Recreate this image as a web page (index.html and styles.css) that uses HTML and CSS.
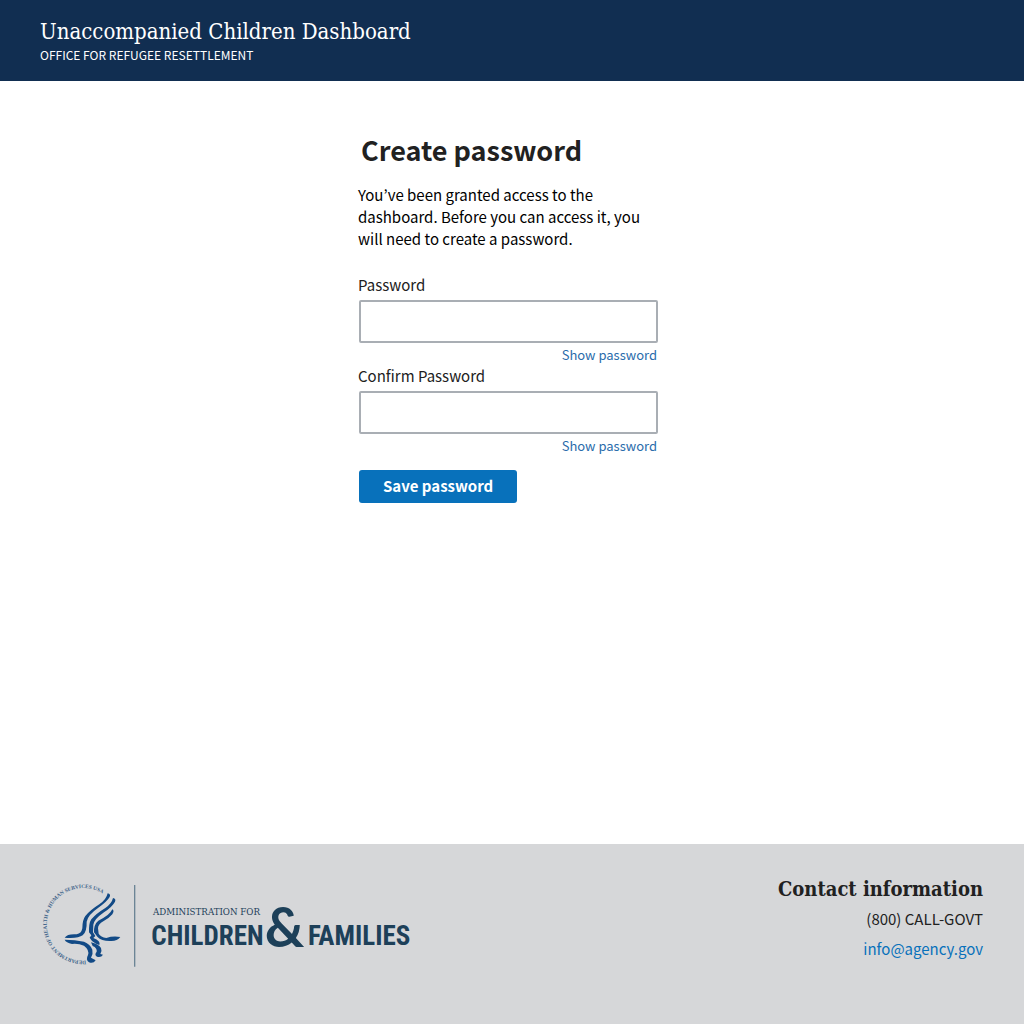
FILE: index.html
```html
<!DOCTYPE html>
<html lang="en">
<head>
<meta charset="utf-8">
<meta name="viewport" content="width=device-width, initial-scale=1">
<title>Create password</title>
<link rel="stylesheet" href="styles.css">
</head>
<body>
<header class="site-header">
  <p class="site-title">Unaccompanied Children Dashboard</p>
  <p class="site-office">OFFICE FOR REFUGEE RESETTLEMENT</p>
</header>
<main class="main">
  <form class="form">
    <h1 class="form-title">Create password</h1>
    <p class="form-intro">You’ve been granted access to the dashboard. Before you can access it, you will need to create a password.</p>
    <div class="field">
      <label class="field-label" for="password">Password</label>
      <input class="field-input" id="password" type="password">
      <a class="field-toggle" href="#password">Show password</a>
    </div>
    <div class="field">
      <label class="field-label" for="confirm">Confirm Password</label>
      <input class="field-input" id="confirm" type="password">
      <a class="field-toggle" href="#confirm">Show password</a>
    </div>
    <button class="save" type="button">Save password</button>
  </form>
</main>
<footer class="site-footer">
  <svg class="logo" viewBox="30 24 1122 258" role="img" aria-label="Administration for Children and Families">
    <defs><path id="ring" d="M168 257A109 109 0 1 1 240 75"/></defs>
    <text class="logo-ring"><textPath href="#ring">DEPARTMENT OF HEALTH &amp; HUMAN SERVICES USA</textPath></text>
    <g class="logo-eagle">
      <path d="M233 55Q243 57 239 66Q231 80 205 98Q173 120 170 140Q171 170 158 181Q145 191 104 188Q112 176 140 178Q154 176 157 160Q157 135 166 123Q181 105 208 88Q229 74 233 55Z"/>
      <path d="M249 69Q259 71 255 80Q248 94 222 112Q193 132 190 149L189 172L196 183L190 189Q213 198 208 210L198 206Q184 199 179 188L184 181L177 172Q176 145 184 133Q198 116 226 99Q245 86 249 69Z"/>
      <path d="M247 103Q254 107 247 118Q237 130 220 139Q204 148 204 160L206 176Q212 186 229 189Q249 182 271 186Q261 200 239 198Q214 198 202 185L192 172Q191 148 205 137Q239 121 247 103Z"/>
      <path d="M104 194Q135 194 162 200Q181 207 187 224Q190 236 183 248L197 256Q190 267 177 262Q166 255 174 240Q179 225 162 212Q145 205 126 207Q108 203 104 194Z"/>
      <path d="M183 202Q205 207 213 219Q217 228 211 237L219 239Q213 249 201 245Q192 240 200 230Q202 219 188 213Z"/>
    </g>
    <path class="logo-rule" d="M314 30V275"/>
    <text class="logo-small" x="369" y="121">ADMINISTRATION FOR</text>
    <text class="logo-big" x="364" y="209">CHILDREN</text>
    <text class="logo-amp" x="704" y="216">&amp;</text>
    <text class="logo-big" x="834" y="209">FAMILIES</text>
  </svg>
  <address class="contact">
    <h2 class="contact-title">Contact information</h2>
    <p class="contact-line">(800) CALL-GOVT</p>
    <a class="contact-line contact-link" href="mailto:info@agency.gov">info@agency.gov</a>
  </address>
</footer>
</body>
</html>
```
FILE: styles.css
```css
* { box-sizing: border-box; }

body {
  margin: 0;
  min-height: 100vh;
  display: flex;
  flex-direction: column;
  background: #fff;
  color: #212121;
  font-family: "Noto Sans CJK KR", "Open Sans", sans-serif;
  font-size: 15px;
  line-height: 22px;
}

h1, h2, p { margin: 0; }

a { text-decoration: none; }

.site-header {
  padding: 18px 40px 17px;
  background: #112e51;
  color: #fff;
}

.site-title {
  font-family: "DejaVu Serif Condensed", "DejaVu Serif", serif;
  font-size: 22px;
  line-height: 28px;
}

.site-office {
  font-size: 12px;
  line-height: 18px;
}

.main {
  flex: 1;
  display: flex;
  justify-content: center;
  align-items: flex-start;
  padding: 49px 8px 40px 0;
}

.form {
  width: 300px;
  display: flex;
  flex-direction: column;
}

.form-title {
  padding-left: 3px;
  font-size: 27px;
  font-weight: 700;
  line-height: 40px;
}

.form-intro {
  margin: 14px 0 24px;
  color: #000;
}

.field {
  display: flex;
  flex-direction: column;
}

.field-label { line-height: 22px; }

.field-input {
  height: 43px;
  margin: 4px 0 2px 1px;
  padding: 0 10px;
  border: 2px solid #a9aeb4;
  border-radius: 2px;
  background: #fff;
  font: inherit;
}

.field-toggle {
  align-self: flex-end;
  margin-right: 1px;
  color: #2a6cab;
  font-size: 13px;
  line-height: 20px;
}

.save {
  align-self: flex-start;
  margin: 14px 0 0 1px;
  padding: 0 24px 2px;
  height: 33px;
  border: 0;
  border-radius: 3px;
  background: #0871bb;
  color: #fff;
  font-family: inherit;
  font-size: 15px;
  font-weight: 700;
}

.site-footer {
  display: flex;
  justify-content: space-between;
  align-items: flex-start;
  padding: 30px 41px 55px 40px;
  background: #d6d7d9;
}

.logo {
  width: 374px;
  height: 86px;
  margin-top: 9px;
}

.logo-eagle { fill: #124a86; }

.logo-ring {
  fill: #3d6389;
  font-family: "Liberation Serif", serif;
  font-size: 16px;
  font-weight: 700;
}

.logo-rule {
  stroke: #6c8596;
  stroke-width: 4px;
}

.logo-small {
  fill: #1d4059;
  font-family: "DejaVu Serif Condensed", "DejaVu Serif", serif;
  font-size: 29px;
}

.logo-big {
  fill: #1d4059;
  font-family: "Roboto Condensed", Roboto, sans-serif;
  font-size: 81px;
  font-weight: 700;
}

.logo-amp {
  fill: #1d4059;
  font-family: Lato, sans-serif;
  font-size: 164px;
  font-weight: 700;
}

.contact {
  display: flex;
  flex-direction: column;
  align-items: flex-end;
  font-style: normal;
}

.contact-title {
  font-family: "DejaVu Serif Condensed", "DejaVu Serif", serif;
  font-size: 20px;
  font-weight: 700;
  line-height: 30px;
}

.contact-line { line-height: 30px; }

.contact-link { color: #0871bb; }
```
